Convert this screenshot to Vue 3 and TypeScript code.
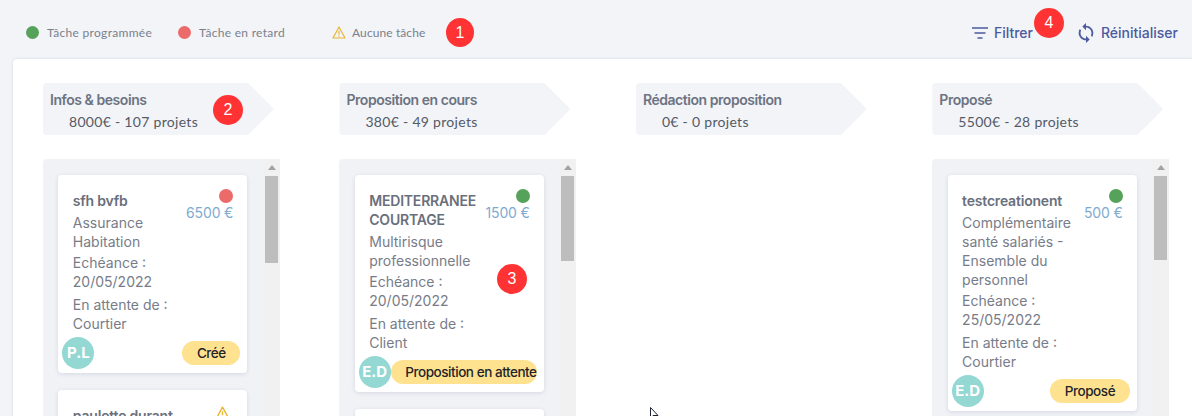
<script setup lang="ts">
interface Card {
  name: string
  product: string
  due: string
  waiting: string
  amount: string
  status: 'green' | 'red' | 'warn'
  initials: string
  tag: string
}
interface Column {
  title: string
  sub: string
  thumb: number
  cards: Card[]
}

const columns: Column[] = [
  {
    title: 'Infos & besoins',
    sub: '8000€ - 107 projets',
    thumb: 87,
    cards: [
      { name: 'sfh bvfb', product: 'Assurance Habitation', due: '20/05/2022', waiting: 'Courtier', amount: '6500 €', status: 'red', initials: 'P.L', tag: 'Créé' },
      { name: 'paulette durant', product: '', due: '', waiting: '', amount: '', status: 'warn', initials: '', tag: '' },
    ],
  },
  {
    title: 'Proposition en cours',
    sub: '380€ - 49 projets',
    thumb: 85,
    cards: [
      { name: 'MEDITERRANEE COURTAGE', product: 'Multirisque professionnelle', due: '20/05/2022', waiting: 'Client', amount: '1500 €', status: 'green', initials: 'E.D', tag: 'Proposition en attente' },
      { name: '', product: '', due: '', waiting: '', amount: '', status: 'green', initials: '', tag: '' },
    ],
  },
  { title: 'Rédaction proposition', sub: '0€ - 0 projets', thumb: 0, cards: [] },
  {
    title: 'Proposé',
    sub: '5500€ - 28 projets',
    thumb: 84,
    cards: [
      { name: 'testcreationent', product: 'Complémentaire santé salariés - Ensemble du personnel', due: '25/05/2022', waiting: 'Courtier', amount: '500 €', status: 'green', initials: 'E.D', tag: 'Proposé' },
    ],
  },
]
</script>

<template>
  <div class="page">
    <header class="topbar">
      <div class="legend">
        <span class="legend-item"><i class="dot green"></i>Tâche programmée</span>
        <span class="legend-item"><i class="dot red"></i>Tâche en retard</span>
        <span class="legend-item legend-warn">
          <svg class="warn-small" viewBox="0 0 14 13" width="14" height="13" aria-hidden="true">
            <path d="M7 1 L13 12 H1 Z" fill="none" stroke="#e8b632" stroke-width="1.2" stroke-linejoin="round" />
            <path d="M7 4.8 V8.6 M7 9.6 V10.8" stroke="#e8b632" stroke-width="1.2" />
          </svg>
          Aucune tâche
        </span>
      </div>
      <div class="actions">
        <button class="action filter">
          <svg viewBox="0 0 16 12" width="16" height="12" aria-hidden="true">
            <path d="M0 1 H16 M2.5 6 H13.5 M5.5 11 H10.5" stroke="#4c5a9e" stroke-width="1.7" fill="none" />
          </svg>
          Filtrer
        </button>
        <button class="action reset">
          <svg viewBox="0 0 24 24" width="22" height="22" aria-hidden="true">
            <path fill="#4c5a9e" d="M12 4V1L8 5l4 4V6c3.31 0 6 2.69 6 6 0 1.01-.25 1.97-.7 2.8l1.46 1.46C19.54 15.03 20 13.57 20 12c0-4.42-3.58-8-8-8zm0 14c-3.31 0-6-2.69-6-6 0-1.01.25-1.97.7-2.8L5.24 7.74C4.46 8.97 4 10.43 4 12c0 4.42 3.58 8 8 8v3l4-4-4-4v3z" />
          </svg>
          Réinitialiser
        </button>
      </div>
    </header>

    <main class="panel">
      <section v-for="col in columns" :key="col.title" class="column">
        <div class="col-head">
          <div class="col-title">{{ col.title }}</div>
          <div class="col-sub">{{ col.sub }}</div>
        </div>
        <div v-if="col.cards.length" class="list">
          <div class="cards">
            <article v-for="(card, i) in col.cards" :key="i" class="card">
              <div class="card-main">
                <div class="card-text">
                  <div class="card-name">{{ card.name }}</div>
                  <div class="card-line">{{ card.product }}</div>
                  <div class="card-line due">Echéance : {{ card.due }}</div>
                  <div class="card-line waiting">En attente de : {{ card.waiting }}</div>
                </div>
                <div class="card-side">
                  <svg v-if="card.status === 'warn'" class="warn-big" viewBox="0 0 14 13" width="15" height="14" aria-hidden="true">
                    <path d="M7 1 L13 12 H1 Z" fill="none" stroke="#e8b632" stroke-width="1.3" stroke-linejoin="round" />
                    <path d="M7 4.8 V8.6 M7 9.6 V10.8" stroke="#e8b632" stroke-width="1.3" />
                  </svg>
                  <i v-else class="dot status" :class="card.status"></i>
                  <div class="card-amount">{{ card.amount }}</div>
                </div>
              </div>
              <div v-if="card.tag" class="card-foot">
                <span class="avatar">{{ card.initials }}</span>
                <span class="tag">{{ card.tag }}</span>
              </div>
            </article>
          </div>
          <div class="scrollbar" aria-hidden="true">
            <span class="arrow"></span>
            <span class="thumb" :style="{ height: col.thumb + 'px' }"></span>
          </div>
        </div>
      </section>
    </main>

    <span class="mark m1">1</span>
    <span class="mark m2">2</span>
    <span class="mark m3">3</span>
    <span class="mark m4">4</span>

    <svg class="cursor" viewBox="0 0 12 12" width="12" height="12" aria-hidden="true">
      <path d="M0.5 0.5 V11 L3 8.5 H8 Z" fill="#fff" stroke="#1f2433" stroke-width="1" />
    </svg>
  </div>
</template>

<style>
html,
body {
  margin: 0;
  overflow: hidden;
}
</style>

<style scoped>
.page {
  position: relative;
  width: 1192px;
  height: 416px;
  overflow: hidden;
  display: flex;
  flex-direction: column;
  background: #f2f4f8;
  font-family: Inter, "Noto Sans", sans-serif;
}
.topbar {
  flex: none;
  height: 59px;
  box-sizing: border-box;
  padding: 6px 14px 0 26px;
  display: flex;
  align-items: center;
  justify-content: space-between;
}
.legend {
  display: flex;
  align-items: center;
  gap: 26px;
  font-family: Lato, sans-serif;
  font-size: 12px;
  letter-spacing: 0.3px;
  color: #7b808b;
}
.legend-item {
  display: flex;
  align-items: center;
  gap: 8px;
}
.legend-warn {
  margin-left: 21px;
  gap: 6px;
  letter-spacing: 0.1px;
}
.dot {
  display: block;
  width: 13px;
  height: 13px;
  border-radius: 50%;
}
.green {
  background: #57a25b;
}
.red {
  background: #ec6a6a;
}
.actions {
  display: flex;
  align-items: center;
  gap: 45px;
}
.action {
  display: flex;
  align-items: center;
  border: 0;
  padding: 0;
  background: none;
  font-family: Inter, sans-serif;
  font-size: 14px;
  font-weight: 500;
  color: #4c5a9e;
}
.filter {
  gap: 6px;
}
.reset {
  gap: 4px;
  margin-left: -3px;
}
.panel {
  flex: 1;
  min-height: 0;
  margin-left: 13px;
  padding: 24px 0 0 30px;
  background: #fff;
  border-radius: 4px 0 0 0;
  box-shadow: 0 0 3px rgba(60, 70, 100, 0.18);
  display: grid;
  grid-template-columns: repeat(4, 237px);
  column-gap: 59.45px;
  overflow: hidden;
}
.column {
  display: flex;
  flex-direction: column;
  min-height: 0;
}
.col-head {
  flex: none;
  box-sizing: border-box;
  width: 231px;
  height: 52px;
  margin-bottom: 24px;
  padding: 7px 0 0 7px;
  background: #f2f4f8;
  border-radius: 4px;
  clip-path: path("M0 0H205L229.5 24.5Q231 26 229.5 27.5L205 52H0Z");
}
.col-title {
  font-size: 14px;
  line-height: 19px;
  font-weight: 600;
  letter-spacing: -0.45px;
  color: #6d7381;
}
.col-sub {
  margin-top: 3px;
  padding-left: 19px;
  font-family: Lato, sans-serif;
  font-size: 14px;
  line-height: 19px;
  letter-spacing: 0.3px;
  color: #555a66;
}
.list {
  flex: 1;
  min-height: 0;
  display: flex;
  background: #f0f2f6;
  border-radius: 4px 0 0 0;
  overflow: hidden;
}
.cards {
  flex: 1;
  min-width: 0;
  padding: 16px 15.7px 0 15.3px;
  display: flex;
  flex-direction: column;
  gap: 17px;
}
.card {
  flex: none;
  background: #fff;
  border-radius: 4px;
  box-shadow: 0 1px 4px rgba(70, 80, 110, 0.16);
  padding: 14px 14px 4px 14.5px;
}
.card-main {
  display: flex;
  justify-content: space-between;
}
.card-text {
  width: 114px;
  padding-top: 1.5px;
  font-size: 14px;
  line-height: 19px;
  color: #777c88;
}
.card-name {
  font-weight: 600;
  letter-spacing: -0.2px;
  color: #6a6f7c;
  min-height: 19px;
  margin-bottom: 3px;
}
.due {
  margin-top: 2px;
}
.waiting {
  margin-top: 4px;
}
.card-side {
  display: flex;
  flex-direction: column;
  align-items: flex-end;
}
.status {
  width: 14px;
  height: 14px;
}
.warn-big {
  margin: 2px 3px 0 0;
}
.card-amount {
  margin-top: 1px;
  font-size: 14px;
  line-height: 17px;
  letter-spacing: -0.15px;
  white-space: nowrap;
  color: #7fabcf;
}
.card-foot {
  margin: 4.5px -7px 0 -10.5px;
  display: flex;
  align-items: center;
  justify-content: space-between;
}
.avatar {
  flex: none;
  width: 32px;
  height: 32px;
  border-radius: 50%;
  background: #94d8d3;
  color: #fff;
  font-size: 15px;
  font-weight: 700;
  line-height: 32px;
  text-align: center;
}
.tag {
  min-width: 0;
  height: 24px;
  padding: 0 14.5px;
  border-radius: 12px;
  background: #fee28f;
  color: #23242a;
  font-size: 13.5px;
  font-weight: 500;
  letter-spacing: -0.45px;
  line-height: 24px;
  white-space: nowrap;
}
.scrollbar {
  flex: none;
  width: 17px;
  padding-top: 6px;
  box-sizing: border-box;
  background: #f1f1f1;
  display: flex;
  flex-direction: column;
  align-items: center;
}
.arrow {
  width: 0;
  height: 0;
  border-left: 4px solid transparent;
  border-right: 4px solid transparent;
  border-bottom: 5px solid #a3a3a3;
}
.thumb {
  margin-top: 6px;
  width: 13px;
  background: #bdbdbd;
}
.mark {
  position: absolute;
  width: 30px;
  height: 30px;
  border-radius: 50%;
  background: #ff3333;
  color: #fff;
  font-family: "Liberation Sans", Arial, sans-serif;
  font-size: 16px;
  line-height: 30px;
  text-align: center;
}
.m1 {
  left: 446px;
  top: 18px;
  width: 28px;
  height: 29px;
  line-height: 29px;
}
.m2 {
  left: 213px;
  top: 95px;
}
.m3 {
  left: 497px;
  top: 264px;
}
.m4 {
  left: 1034px;
  top: 8px;
}
.cursor {
  position: absolute;
  left: 650px;
  top: 407px;
}
</style>
